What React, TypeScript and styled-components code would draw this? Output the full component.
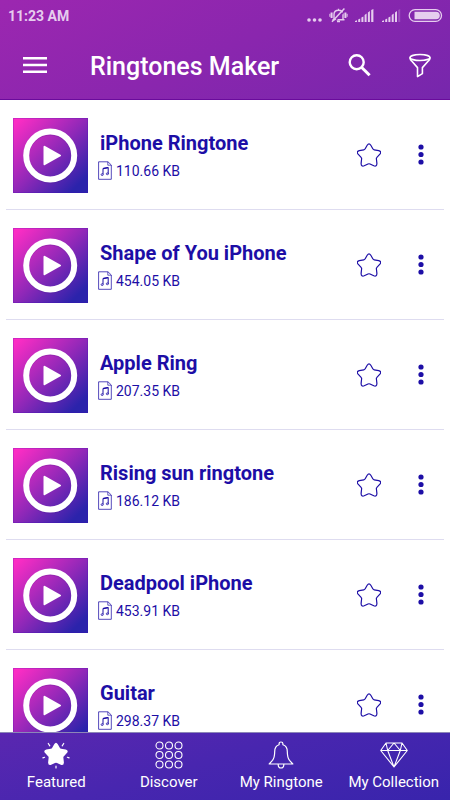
import React from "react";
import styled, { createGlobalStyle } from "styled-components";

const GlobalStyle = createGlobalStyle`
  * { box-sizing: border-box; }
  body { margin: 0; background: #fff; font-family: Roboto, sans-serif; }
  button { border: 0; padding: 0; background: none; color: inherit; font: inherit; cursor: pointer; }
  svg { display: block; flex: none; }
`;

const Screen = styled.div`
  display: flex;
  flex-direction: column;
  height: 100vh;
  overflow: hidden;
`;

const TopArea = styled.header`
  flex: none;
  color: #fff;
  background: linear-gradient(155deg, #9c27b0 0%, #8a26ae 50%, #7627ac 100%);
  border-bottom: 1px solid #6a0b9c;
`;

const StatusBar = styled.div`
  display: flex;
  align-items: center;
  justify-content: space-between;
  height: 32px;
  padding: 0 7px 0 8px;
  color: #e6cdee;
`;

const Clock = styled.span`
  font-size: 14px;
  font-weight: 700;
  line-height: 20px;
`;

const Toolbar = styled.div`
  display: flex;
  align-items: center;
  height: 67px;
  padding: 0 17px 0 22px;
`;

const Title = styled.h1`
  flex: 1;
  margin: 0 0 0 42px;
  padding-top: 2px;
  font-size: 25px;
  font-weight: 500;
  line-height: 32px;
`;

const IconButton = styled.button<{ $gap?: number }>`
  display: flex;
  align-items: center;
  justify-content: center;
  width: 26px;
  height: 40px;
  margin-left: ${(p) => p.$gap ?? 0}px;
`;

const List = styled.ul`
  flex: 1;
  min-height: 0;
  margin: 0;
  padding: 0 6px;
  overflow: hidden;
  list-style: none;
  color: #1d0ea6;
`;

const Row = styled.li`
  display: flex;
  align-items: center;
  height: 110px;
  padding: 1px 10px 0 7px;
  border-bottom: 1px solid #dedcf0;
`;

const PlayButton = styled.button`
  flex: none;
  width: 75px;
  height: 75px;
  background: linear-gradient(135deg, #fb2dc4 5%, #9028b8 50%, #2b23ab 88%);
  box-shadow: inset 0 0 0 1px rgba(60, 10, 180, 0.22);
`;

const Info = styled.div`
  flex: 1;
  min-width: 0;
  padding-left: 10px;
`;

const Name = styled.h2`
  margin: 0 0 0 2px;
  font-size: 20px;
  font-weight: 700;
  line-height: 26px;
  white-space: nowrap;
`;

const Meta = styled.div`
  display: flex;
  align-items: center;
  gap: 4px;
  margin-top: 5px;
  font-size: 14px;
  line-height: 20px;
`;

const Nav = styled.nav`
  flex: none;
  display: grid;
  grid-template-columns: repeat(4, 1fr);
  height: 68px;
  border-top: 1px solid #8c86b8;
  color: #fff;
  background: linear-gradient(165deg, #5a27b0 0%, #4826af 45%, #3824ac 100%);
`;

const NavItem = styled.button`
  display: flex;
  flex-direction: column;
  align-items: center;
  justify-content: flex-start;
`;

const NavIcon = styled.span`
  margin-top: 8px;
`;

const NavLabel = styled.span`
  margin-top: 3px;
  font-size: 15px;
  line-height: 20px;
  white-space: nowrap;
`;

const STAR =
  "M10.2 2.3Q12 -0.7 13.8 2.3L15.8 5.8Q16.2 6.6 17.2 6.8L21.7 7.6Q25 8.6 22.9 11.1L19.9 14.3Q19.2 15 19.4 16L19.9 20.4Q19.8 23.9 16.8 22.8L13 21Q12 20.5 11 21L7.2 22.8Q4.2 23.9 4.1 20.4L4.6 16Q4.8 15 4.1 14.3L1.1 11.1Q-1 8.6 2.3 7.6L6.8 6.8Q7.8 6.6 8.2 5.8Z";

const StatusIcons = () => (
  <svg width="136" height="20" viewBox="0 0 136 18" fill="currentColor" aria-hidden="true">
    <circle cx="2" cy="13" r="1.8" />
    <circle cx="7.5" cy="13" r="1.8" />
    <circle cx="13" cy="13" r="1.8" />
    <g fill="none" stroke="currentColor" strokeWidth="1.4">
      <path d="M27 12.5V7.5Q27 3.2 31.5 3.2T36 7.5V12.5M25.5 12.8H37.5M30 14.5H33M31.5 3.5V1.7" />
      <path d="M24.6 5.5V11M38.4 5.5V11" strokeWidth="2" />
      <path d="M22.9 6.8V9.8M40.1 6.8V9.8" strokeWidth="1" />
      <path d="M27.5 14.8L38.6 3" stroke="#8526ae" strokeWidth="1.2" />
      <path d="M25 14.8L37.4 1.6" strokeWidth="1.5" />
    </g>
    <path d="M48 15V14L50 13.3V15ZM51.2 15V12.5L53.2 11.5V15ZM54.4 15V10.5L56.4 9.5V15ZM57.6 15V8L59.6 6.5V15ZM60.9 15V5.5L62.9 4V15ZM64.2 15V3L66.4 2V15Z" />
    <path d="M75 15V14L77 13.3V15ZM78.2 15V12.5L80.2 11.5V15ZM81.4 15V10.5L83.4 9.5V15ZM84.7 15V8L86.7 6.5V15ZM88 15V5.5L90 4V15Z" />
    <path d="M91.2 15V3L93.2 2V15Z" opacity="0.25" />
    <rect x="102.2" y="2.7" width="32.3" height="11.6" rx="5.8" fill="none" stroke="currentColor" strokeWidth="1.3" />
    <path d="M107.5 4.7H129Q132.8 4.7 132.8 8.5T129 12.3H107.5Z" />
  </svg>
);

const MenuIcon = () => (
  <svg width="24" height="20" fill="#fff">
    <path d="M0 1H24V3.4H0ZM0 7.8H24V10.2H0ZM0 14.6H24V17H0Z" />
  </svg>
);

const SearchIcon = () => (
  <svg width="24" height="24" fill="none" stroke="#fff">
    <circle cx="9.7" cy="8.2" r="7" strokeWidth="2.4" />
    <path d="M14.5 13.2L22.6 21.3" strokeWidth="3" />
  </svg>
);

const FilterIcon = () => (
  <svg width="24" height="26" fill="none" stroke="#fff" strokeWidth="1.6" strokeLinejoin="round">
    <ellipse cx="12" cy="4.5" rx="10" ry="3" />
    <path d="M2 4.5Q2 6.5 3.5 7.8L9.5 14.6V23.6L14.4 20.6V14.6L20.5 7.8Q22 6.5 22 4.5" />
  </svg>
);

const PlayIcon = () => (
  <svg width="75" height="75" viewBox="0 0 75 75">
    <circle cx="37.2" cy="38.5" r="24" fill="none" stroke="#411b80" strokeOpacity="0.2" strokeWidth="6" />
    <circle cx="37.2" cy="37.5" r="24" fill="none" stroke="#fff" strokeWidth="6" />
    <path d="M31.5 28.8L47 37.5L31.5 46.2Z" fill="#fff" stroke="#fff" strokeWidth="2" strokeLinejoin="round" />
  </svg>
);

const MusicFileIcon = () => (
  <svg width="14" height="19" viewBox="0 0 14 19" fill="none" stroke="#1d0ea6">
    <path d="M0.6 0.8H10L13.3 4V18.3H0.6Z" strokeWidth="1" opacity="0.75" />
    <path d="M9.8 0.9V4.2H13.2" strokeWidth="0.9" opacity="0.75" />
    <path d="M5 13.3V7.5L10.2 6.5V12.8" strokeWidth="1" />
    <path d="M5 7.6L10.2 6.6" strokeWidth="1.4" />
    <ellipse cx="4.2" cy="13.6" rx="1.1" ry="0.9" strokeWidth="0.8" />
    <ellipse cx="9.4" cy="12.8" rx="1.1" ry="0.9" strokeWidth="0.8" />
  </svg>
);

const StarIcon = () => (
  <svg width="24" height="24" viewBox="0 0 24 24" fill="none" stroke="#1d0ea6" strokeWidth="1.2">
    <path d={STAR} />
  </svg>
);

const MoreIcon = () => (
  <svg width="6" height="22" fill="#1d0ea6">
    <circle cx="3" cy="3" r="2.6" />
    <circle cx="3" cy="10.5" r="2.6" />
    <circle cx="3" cy="18" r="2.6" />
  </svg>
);

const FeaturedIcon = () => (
  <svg width="28" height="28" fill="#fff" stroke="#fff">
    <path d={STAR} transform="translate(2 1)" stroke="none" />
    <path
      d="M6.3 2.5L7.8 4.8M21.7 2.5L20.2 4.8M0.9 16.9L2.6 16.3M27.1 16.9L25.4 16.3M14 25.2V27"
      strokeWidth="1.2"
      strokeLinecap="round"
    />
  </svg>
);

const DiscoverIcon = () => (
  <svg width="28" height="28" fill="none" stroke="#fff" strokeWidth="1.1">
    {[4.5, 14, 23.5].map((y) => [4.5, 14, 23.5].map((x) => <circle key={`${x}-${y}`} cx={x} cy={y} r="3.5" />))}
  </svg>
);

const BellIcon = () => (
  <svg width="28" height="28" fill="none" stroke="#fff" strokeWidth="1.2" strokeLinejoin="round">
    <path d="M12.1 3.8V2.8Q12.1 1 14 1T15.9 2.8V3.8Q20.3 5.2 20.3 10.5Q20.3 16.5 22.5 19.3L25.8 23H2.2L5.5 19.3Q7.7 16.5 7.7 10.5Q7.7 5.2 12.1 3.8Z" />
    <path d="M11.2 23V24.2Q11.5 27 14 27T16.8 24.2V23" />
  </svg>
);

const DiamondIcon = () => (
  <svg width="28" height="28" fill="none" stroke="#fff" strokeWidth="1.1" strokeLinejoin="round">
    <path d="M6 2H22L27.3 9.5L14 26L0.7 9.5ZM0.7 9.5H27.3M6 2L7.7 9.5L14 2L20.3 9.5L22 2M7.7 9.5L14 26L20.3 9.5" />
  </svg>
);

const tones = [
  { name: "iPhone Ringtone", size: "110.66 KB" },
  { name: "Shape of You iPhone", size: "454.05 KB" },
  { name: "Apple Ring", size: "207.35 KB" },
  { name: "Rising sun ringtone", size: "186.12 KB" },
  { name: "Deadpool iPhone", size: "453.91 KB" },
  { name: "Guitar", size: "298.37 KB" },
];

const tabs = [
  { label: "Featured", Icon: FeaturedIcon },
  { label: "Discover", Icon: DiscoverIcon },
  { label: "My Ringtone", Icon: BellIcon },
  { label: "My Collection", Icon: DiamondIcon },
];

export default function App() {
  return (
    <>
      <GlobalStyle />
      <Screen>
        <TopArea>
          <StatusBar>
            <Clock>11:23 AM</Clock>
            <StatusIcons />
          </StatusBar>
          <Toolbar>
            <IconButton aria-label="Menu"><MenuIcon /></IconButton>
            <Title>Ringtones Maker</Title>
            <IconButton aria-label="Search"><SearchIcon /></IconButton>
            <IconButton aria-label="Filter" $gap={35}><FilterIcon /></IconButton>
          </Toolbar>
        </TopArea>
        <List>
          {tones.map((tone) => (
            <Row key={tone.name}>
              <PlayButton aria-label={`Play ${tone.name}`}><PlayIcon /></PlayButton>
              <Info>
                <Name>{tone.name}</Name>
                <Meta><MusicFileIcon />{tone.size}</Meta>
              </Info>
              <IconButton aria-label={`Favourite ${tone.name}`}><StarIcon /></IconButton>
              <IconButton aria-label={`More options for ${tone.name}`} $gap={26}><MoreIcon /></IconButton>
            </Row>
          ))}
        </List>
        <Nav>
          {tabs.map(({ label, Icon }) => (
            <NavItem key={label}>
              <NavIcon><Icon /></NavIcon>
              <NavLabel>{label}</NavLabel>
            </NavItem>
          ))}
        </Nav>
      </Screen>
    </>
  );
}
